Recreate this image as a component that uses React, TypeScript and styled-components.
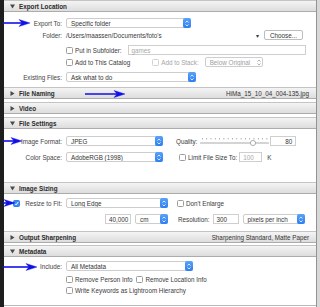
import styled, { createGlobalStyle } from "styled-components";

const GlobalStyle = createGlobalStyle`
  html, body { margin: 0; padding: 0; background: #fff; }
  body { font-family: "Liberation Sans", Arial, sans-serif; }
`;

const Frame = styled.div`
  position: relative;
  width: 320px;
  height: 307px;
  overflow: hidden;
  background: #fff;
  display: flex;
  font-size: 6.3px;
  color: #3a3a3a;
`;

const LeftEdge = styled.div`
  width: 4px;
  flex: none;
  background: #1e1e1e;
`;

const RightEdge = styled.div`
  width: 4px;
  flex: none;
  background: linear-gradient(to right, #939393 0 1px, #d8d8d8 1px);
`;

const Panel = styled.div`
  flex: 1;
  height: 306px;
  box-sizing: border-box;
  border-bottom: 1px solid #b9b9b9;
  display: flex;
  flex-direction: column;
`;

const Header = styled.div<{ $mt?: number }>`
  height: 12px;
  flex: none;
  box-sizing: border-box;
  margin-top: ${(p) => p.$mt ?? 0}px;
  border-top: 1px solid #c4c4c4;
  border-bottom: 1px solid #acacac;
  background: linear-gradient(#f4f4f4, #dddddd);
  display: flex;
  align-items: center;
  gap: 4px;
  padding: 0 7px 0 2px;
  font-weight: bold;
  color: #2a2a2a;
`;

const HeaderNote = styled.span`
  margin-left: auto;
  font-weight: normal;
  color: #333;
`;

const Body = styled.div<{ $pt: number; $pb: number }>`
  display: flex;
  flex-direction: column;
  padding: ${(p) => p.$pt}px 0 ${(p) => p.$pb}px;
`;

const Row = styled.div<{ $h?: number; $mt?: number }>`
  height: ${(p) => p.$h ?? 12}px;
  margin-top: ${(p) => p.$mt ?? 0}px;
  display: flex;
  align-items: center;
  white-space: nowrap;
`;

const Label = styled.div`
  width: 58px;
  flex: none;
  margin-right: 4px;
  display: flex;
  justify-content: flex-end;
  align-items: center;
  gap: 3px;
  color: #444;
`;

const Text = styled.span<{ $ml?: number; $dim?: boolean }>`
  margin-left: ${(p) => p.$ml ?? 0}px;
  color: ${(p) => (p.$dim ? "#a5a5a5" : "#3a3a3a")};
`;

const Spacer = styled.span`
  flex: 1;
`;

const SelectBox = styled.div<{ $w: number; $ml?: number; $dim?: boolean }>`
  width: ${(p) => p.$w}px;
  height: 10px;
  flex: none;
  margin-left: ${(p) => p.$ml ?? 0}px;
  box-sizing: border-box;
  border: 1px solid #cdcdcd;
  border-radius: 2px;
  background: #fff;
  display: flex;
  align-items: center;
  color: ${(p) => (p.$dim ? "#a0a0a0" : "#333")};
`;

const SelectText = styled.span`
  flex: 1;
  padding-left: 4px;
  overflow: hidden;
`;

const Stepper = styled.span<{ $dim?: boolean }>`
  width: 8px;
  height: 10px;
  margin: -1px -1px -1px 0;
  flex: none;
  border-radius: 2px;
  background: ${(p) => (p.$dim ? "transparent" : "linear-gradient(#5aa2f8, #2d7ef2)")};
  display: flex;
  align-items: center;
  justify-content: center;
`;

const Input = styled.div<{ $w: number; $ml?: number; $right?: boolean; $dim?: boolean }>`
  width: ${(p) => p.$w}px;
  height: 10px;
  flex: none;
  margin-left: ${(p) => p.$ml ?? 0}px;
  box-sizing: border-box;
  border: 1px solid #cfcfcf;
  background: #fff;
  display: flex;
  align-items: center;
  justify-content: ${(p) => (p.$right ? "flex-end" : "flex-start")};
  padding: 0 3px;
  color: ${(p) => (p.$dim ? "#a8a8a8" : "#333")};
`;

const Check = styled.span<{ $ml?: number; $on?: boolean; $dim?: boolean }>`
  width: 7px;
  height: 7px;
  flex: none;
  margin-left: ${(p) => p.$ml ?? 0}px;
  margin-right: 2px;
  box-sizing: border-box;
  border: 1px solid ${(p) => (p.$on ? "#2f7ff0" : p.$dim ? "#d2d2d2" : "#9c9c9c")};
  border-radius: 1.5px;
  background: ${(p) => (p.$on ? "#3b89f5" : "#fff")};
  display: flex;
  align-items: center;
  justify-content: center;
`;

const Button = styled.div`
  width: 39px;
  height: 10px;
  flex: none;
  box-sizing: border-box;
  margin: 0 13px 0 5px;
  border: 1px solid #bdbdbd;
  border-radius: 2px;
  background: #fff;
  display: flex;
  align-items: center;
  justify-content: center;
  color: #333;
`;

const Arrows = styled.svg`
  position: absolute;
  left: 0;
  top: 0;
  pointer-events: none;
`;

function Tri({ open }: { open: boolean }) {
  return (
    <svg width="5" height="5" viewBox="0 0 5 5" style={{ marginLeft: 4 }}>
      {open ? <path d="M0 0.5h5L2.5 4.5z" fill="#4a4a4a" /> : <path d="M0.5 0v5L4.5 2.5z" fill="#4a4a4a" />}
    </svg>
  );
}

function Select({ w, ml, text, dim }: { w: number; ml?: number; text: string; dim?: boolean }) {
  const c = dim ? "#9a9a9a" : "#fff";
  return (
    <SelectBox $w={w} $ml={ml} $dim={dim}>
      <SelectText>{text}</SelectText>
      <Stepper $dim={dim}>
        <svg width="4" height="7" viewBox="0 0 4 7">
          <path d="M0.5 2.6L2 1l1.5 1.6M0.5 4.4L2 6l1.5-1.6" stroke={c} strokeWidth="0.8" fill="none" />
        </svg>
      </Stepper>
    </SelectBox>
  );
}

function Box({ ml, on, dim }: { ml?: number; on?: boolean; dim?: boolean }) {
  return (
    <Check $ml={ml} $on={on} $dim={dim}>
      {on && (
        <svg width="5" height="5" viewBox="0 0 5 5">
          <path d="M0.8 2.6l1.3 1.3L4.3 1" stroke="#fff" strokeWidth="1" fill="none" />
        </svg>
      )}
    </Check>
  );
}

function Slider() {
  const ticks = Array.from({ length: 16 }, (_, i) => 2 + i * 4.3);
  return (
    <svg width="70" height="10" viewBox="0 0 70 10" style={{ marginLeft: 3, flex: "none" }}>
      {ticks.map((x, i) => (
        <rect key={i} x={x} y="2" width="0.8" height="1.4" fill="#9a9a9a" />
      ))}
      <rect x="0" y="6.5" width="69" height="1" rx="0.5" fill="#a9a9a9" />
      <circle cx="53" cy="7" r="2.6" fill="#fff" stroke="#8e8e8e" strokeWidth="0.7" />
    </svg>
  );
}

function Arrow({ x1, x2, y }: { x1: number; x2: number; y: number }) {
  return (
    <g fill="#1010e8" stroke="#1010e8">
      <line x1={x1} y1={y} x2={x2 - 6} y2={y} strokeWidth="1.6" />
      <path d={`M${x2} ${y} L${x2 - 11} ${y - 3.5} L${x2 - 8} ${y} L${x2 - 11} ${y + 3.5} Z`} strokeWidth="0.4" />
    </g>
  );
}

export default function App() {
  return (
    <>
      <GlobalStyle />
      <Frame>
        <LeftEdge />
        <Panel>
          <Header>
            <Tri open />
            Export Location
          </Header>
          <Body $pt={5} $pb={4}>
            <Row>
              <Label>Export To:</Label>
              <Select w={125} text="Specific folder" />
            </Row>
            <Row>
              <Label>Folder:</Label>
              <Text>/Users/maassen/Documents/foto's</Text>
              <Spacer />
              <Text>▾</Text>
              <Button>Choose...</Button>
            </Row>
            <Row $mt={3}>
              <Label />
              <Box />
              <Text>Put in Subfolder:</Text>
              <Input $w={178} $ml={6} $dim>games</Input>
            </Row>
            <Row>
              <Label />
              <Box />
              <Text>Add to This Catalog</Text>
              <Box ml={22} dim />
              <Text $dim>Add to Stack:</Text>
              <Select w={58} ml={6} text="Below Original" dim />
            </Row>
            <Row $mt={3}>
              <Label>Existing Files:</Label>
              <Select w={130} text="Ask what to do" />
            </Row>
          </Body>
          <Header>
            <Tri open={false} />
            File Naming
            <HeaderNote>HiMa_15_10_04_004-135.jpg</HeaderNote>
          </Header>
          <Header $mt={3}>
            <Tri open={false} />
            Video
          </Header>
          <Header $mt={3}>
            <Tri open />
            File Settings
          </Header>
          <Body $pt={6} $pb={16}>
            <Row>
              <Label>Image Format:</Label>
              <Select w={97} text="JPEG" />
              <Text $ml={13}>Quality:</Text>
              <Slider />
              <Input $w={26} $right>80</Input>
            </Row>
            <Row $mt={4}>
              <Label>Color Space:</Label>
              <Select w={97} text="AdobeRGB (1998)" />
              <Box ml={16} />
              <Text>Limit File Size To:</Text>
              <Input $w={23} $ml={2} $dim>100</Input>
              <Text $ml={5}>K</Text>
            </Row>
          </Body>
          <Header $mt={3}>
            <Tri open />
            Image Sizing
          </Header>
          <Body $pt={3} $pb={6}>
            <Row>
              <Label>
                <Box on />
                <span>Resize to Fit:</span>
              </Label>
              <Select w={102} text="Long Edge" />
              <Box ml={9} />
              <Text>Don't Enlarge</Text>
            </Row>
            <Row $mt={4}>
              <Label />
              <Input $w={26} $ml={39}>40,000</Input>
              <Select w={33} ml={4} text="cm" />
              <Text $ml={10}>Resolution:</Text>
              <Input $w={26} $ml={3}>300</Input>
              <Select w={62} ml={4} text="pixels per inch" />
            </Row>
          </Body>
          <Header>
            <Tri open={false} />
            Output Sharpening
            <HeaderNote>Sharpening Standard, Matte Paper</HeaderNote>
          </Header>
          <Header $mt={2}>
            <Tri open />
            Metadata
          </Header>
          <Body $pt={3} $pb={0}>
            <Row>
              <Label>Include:</Label>
              <Select w={127} text="All Metadata" />
            </Row>
            <Row $h={11} $mt={2}>
              <Label />
              <Box />
              <Text>Remove Person Info</Text>
              <Box ml={4} />
              <Text>Remove Location Info</Text>
            </Row>
            <Row $h={11}>
              <Label />
              <Box />
              <Text>Write Keywords as Lightroom Hierarchy</Text>
            </Row>
          </Body>
        </Panel>
        <RightEdge />
        <Arrows width="320" height="307" viewBox="0 0 320 307">
          <Arrow x1={3} x2={30} y={23} />
          <Arrow x1={85} x2={125} y={94} />
          <Arrow x1={3} x2={22} y={141} />
          <Arrow x1={3} x2={15} y={203} />
          <Arrow x1={3} x2={37} y={267} />
        </Arrows>
      </Frame>
    </>
  );
}
